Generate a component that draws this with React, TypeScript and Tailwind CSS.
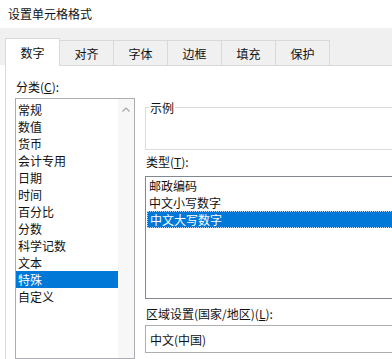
const categories = [
  "常规",
  "数值",
  "货币",
  "会计专用",
  "日期",
  "时间",
  "百分比",
  "分数",
  "科学记数",
  "文本",
  "特殊",
  "自定义",
];

const tabs = ["数字", "对齐", "字体", "边框", "填充", "保护"];

const types = ["邮政编码", "中文小写数字", "中文大写数字"];

const font = "font-['Noto_Sans_CJK_SC','Noto_Sans',sans-serif]";

const App = () => {
  return (
    <div
      className={`${font} flex h-[359px] w-[392px] flex-col overflow-hidden bg-white text-[12px] leading-[17px] text-[#111]`}
    >
      {/* title */}
      <div className="flex h-[28px] shrink-0 items-center pl-[8px] pb-[2px]">设置单元格格式</div>

      {/* tab strip */}
      <div className="flex h-[37px] shrink-0 items-end bg-[#f0f0f0] pl-[5px]">
        {tabs.map((t, i) =>
          i === 0 ? (
            <div
              key={t}
              className="relative -mb-px flex h-[28px] w-[55px] items-center justify-center border border-b-0 border-[#d9d9d9] bg-white pb-[1px]"
            >
              {t}
            </div>
          ) : (
            <div
              key={t}
              className="flex h-[25px] w-[54px] items-center justify-center border border-l-0 border-b-0 border-[#d9d9d9] bg-[#f0f0f0] pt-[1px]"
            >
              {t}
            </div>
          )
        )}
      </div>

      {/* panel */}
      <div className="ml-[5px] flex flex-1 border-t border-l border-[#d9d9d9] bg-white pl-[9px]">
        {/* left column */}
        <div className="flex w-[120px] shrink-0 flex-col pt-[12px]">
          <div className="h-[17px] pl-[1px]">
            分类(<span className="underline">C</span>):
          </div>
          <div className="mt-[3px] flex flex-1 border border-[#abadb3] bg-white">
            <div className="flex flex-1 flex-col pt-[2px]">
              {categories.map((c) =>
                c === "特殊" ? (
                  <div key={c} className="h-[17px] bg-[#0078d7] pl-[2px] text-white">
                    {c}
                  </div>
                ) : (
                  <div key={c} className="h-[17px] pl-[2px]">
                    {c}
                  </div>
                )
              )}
            </div>
            <div className="flex w-[16px] shrink-0 justify-center bg-[#f7f7f7] pt-[8px]">
              <svg width="8" height="5" viewBox="0 0 8 5" fill="none">
                <path d="M0.5 4.5 L4 1 L7.5 4.5" stroke="#a6a6a6" strokeWidth="1.2" />
              </svg>
            </div>
          </div>
        </div>

        {/* right column */}
        <div className="ml-[10px] flex w-[300px] shrink-0 flex-col">
          {/* sample group */}
          <div className="mt-[41px] h-[43px] border border-[#dcdcdc]">
            <span className="relative -top-[9px] ml-[3px] bg-white px-[1px]">示例</span>
          </div>

          <div className="mt-[3px] h-[17px] pl-[1px] leading-[17px]">
            类型(<span className="underline">T</span>):
          </div>
          <div className="mt-[6px] flex h-[123px] flex-col border border-[#828790] pt-[0px]">
            {types.map((t, i) =>
              i === 2 ? (
                <div
                  key={t}
                  className="mx-[1px] h-[17px] border border-dotted border-[#b9d7f3] bg-[#0078d7] pl-[2px] leading-[15px] text-white"
                >
                  {t}
                </div>
              ) : (
                <div key={t} className="h-[17px] pl-[3px]">
                  {t}
                </div>
              )
            )}
          </div>

          <div className="mt-[6px] h-[17px] pl-[1px]">
            区域设置(国家/地区)(<span className="underline">L</span>):
          </div>
          <div className="mt-[3px] flex h-[28px] items-center border border-[#adadad] bg-white pl-[4px]">
            中文(中国)
          </div>
        </div>
      </div>
    </div>
  );
};

export default App;
